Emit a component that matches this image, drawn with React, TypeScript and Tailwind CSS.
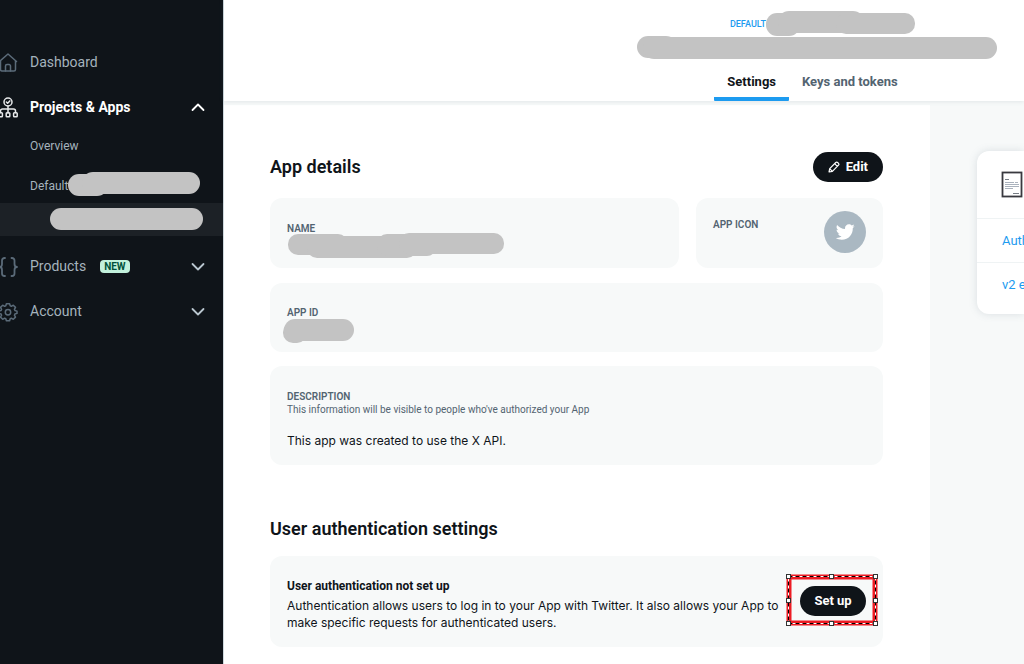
import React from "react";

type NavItemProps = {
  icon: React.ReactNode;
  label: string;
  badge?: string;
  chevron?: "up" | "down";
  active?: boolean;
};

// Sidebar icons
function HomeIcon() {
  return (
    <svg width="20" height="20" viewBox="0 0 20 20" fill="none" stroke="#5b6b79" strokeWidth="1.5" strokeLinejoin="round" strokeLinecap="round">
      <path d="M1.5 8.500 10 1 18.500 8.500M2.500 8v8.500a1.500 1.500 0 0 0 1.500 1.500h12a1.500 1.500 0 0 0 1.500-1.500V8" />
      <path d="M7.500 18v-5a1.500 1.500 0 0 1 1.500-1.500h2a1.500 1.500 0 0 1 1.500 1.500v5" />
    </svg>
  );
}

function ProjectsIcon() {
  return (
    <svg width="20" height="22" viewBox="0 0 20 22" fill="none" stroke="#e7e9ea" strokeWidth="1.5" strokeLinejoin="round" strokeLinecap="round">
      <circle cx="10" cy="5" r="4" />
      <path d="m8.400 5 1.200 1.200 2.200-2.300M10 9v7M2.500 15.500v-1.500a2 2 0 0 1 2-2h11a2 2 0 0 1 2 2v1.500" />
      <rect x="0.800" y="15.800" width="3.600" height="4" rx="0.800" />
      <rect x="8.200" y="15.800" width="3.600" height="4" rx="0.800" />
      <rect x="15.600" y="15.800" width="3.600" height="4" rx="0.800" />
    </svg>
  );
}

function BracesIcon() {
  return (
    <svg width="20" height="20" viewBox="0 0 20 20" fill="none" stroke="#5b6b79" strokeWidth="1.800" strokeLinejoin="round" strokeLinecap="round">
      <path d="M7 1H6.500a2.500 2.500 0 0 0-2.500 2.500V7c0 1.800-.8 3-2.500 3C3.200 10 4 11.200 4 13v3.500A2.500 2.500 0 0 0 6.500 19H7" />
      <path d="M13.500 1h.5a2.500 2.500 0 0 1 2.500 2.500V7c0 1.800.8 3 2.500 3-1.700 0-2.500 1.200-2.500 3v3.500A2.500 2.500 0 0 1 14 19h-.5" />
    </svg>
  );
}

function GearIcon() {
  return (
    <svg width="20" height="20" viewBox="0 0 20 20" fill="none" stroke="#5b6b79" strokeWidth="1.500" strokeLinejoin="round">
      <path d="M8.400 1.700h3.200l.6 2.100 1.200.5 1.900-1.100 2.200 2.200-1.100 1.900.5 1.200 2.100.6v2.300l-2.100.6-.5 1.200 1.100 1.900-2.200 2.200-1.900-1.100-1.200.5-.6 2.100H8.400l-.6-2.100-1.200-.5-1.900 1.100-2.200-2.200 1.100-1.900-.5-1.200L1 11.400V9.100l2.100-.6.5-1.200-1.100-1.900 2.200-2.200 1.900 1.100 1.200-.5z" />
      <circle cx="10" cy="10.200" r="2.700" />
    </svg>
  );
}

function Chevron({ direction }: { direction: "up" | "down" }) {
  return (
    <svg width="14" height="14" viewBox="0 0 14 14" fill="none" stroke={direction === "up" ? "#ffffff" : "#b9c6cf"} strokeWidth="1.800" strokeLinecap="round" strokeLinejoin="round">
      <path d={direction === "up" ? "M1.500 9 7 3.500l5.500 5.500" : "M1.500 4 7 9.500 12.500 4"} />
    </svg>
  );
}

function PencilIcon() {
  return (
    <svg width="12" height="12" viewBox="0 0 12 12" fill="none" stroke="white" strokeWidth="1.200" strokeLinejoin="round">
      <path d="M1 11 1.700 7.600 7.800 1.500a1.300 1.300 0 0 1 1.800 0l.9.9a1.300 1.300 0 0 1 0 1.800L4.400 10.300zM6.700 2.700l2.600 2.600M1.700 7.600l2.700 2.700" />
    </svg>
  );
}

function BirdIcon() {
  return (
    <svg width="20" height="20" viewBox="0 0 24 24" fill="white">
      <path d="M23.643 4.937c-.835.37-1.732.62-2.675.733.962-.576 1.700-1.490 2.048-2.578-.9.534-1.897.922-2.958 1.130-.85-.904-2.060-1.470-3.400-1.470-2.572 0-4.658 2.086-4.658 4.660 0 .364.042.718.120 1.060-3.873-.195-7.304-2.050-9.602-4.868-.4.690-.63 1.490-.63 2.342 0 1.616.823 3.043 2.072 3.878-.764-.025-1.482-.234-2.110-.583v.060c0 2.257 1.605 4.140 3.737 4.568-.392.106-.803.162-1.227.162-.3 0-.593-.028-.877-.082.593 1.850 2.313 3.198 4.352 3.234-1.595 1.250-3.604 1.995-5.786 1.995-.376 0-.747-.022-1.112-.065 2.062 1.323 4.510 2.093 7.140 2.093 8.570 0 13.255-7.098 13.255-13.254 0-.2-.005-.402-.014-.602.910-.658 1.700-1.477 2.323-2.410z" />
    </svg>
  );
}

function DocumentIcon() {
  return (
    <svg width="22" height="27" viewBox="0 0 22 27" fill="none" stroke="#aab2bd">
      <rect x="1.500" y="1.500" width="19" height="24" fill="white" stroke="#39393f" strokeWidth="1.800" />
      <path d="M4 8.500h4M12 22.500h6" stroke="#777d85" />
      <path d="M4 11.500h9M14 11.500h3M4 13.500h14M4 15.500h14M4 17.500h8" />
    </svg>
  );
}

function NavItem({ icon, label, badge, chevron, active }: NavItemProps) {
  return (
    <button type="button" className="flex h-[45px] w-full items-center pr-[18px] text-left">
      <span className="-ml-0.5 flex w-8 shrink-0">
        {icon}
      </span>
      <span className={active ? "text-[14px] font-bold text-white" : "text-[14px] text-[#a5b3bd]"}>{label}</span>
      {badge && (
        <span className="ml-3.5 rounded-sm bg-[#c2f1dc] px-1 text-[10px] leading-[13px] font-bold text-[#00513a]">{badge}</span>
      )}
      {chevron && (
        <span className="ml-auto">
          <Chevron direction={chevron} />
        </span>
      )}
    </button>
  );
}

function Sidebar() {
  return (
    <nav className="w-56 shrink-0 overflow-hidden border-r border-[#cfd9de] bg-[#0f1419] pt-10">
      <NavItem icon={<HomeIcon />} label="Dashboard" />
      <NavItem icon={<ProjectsIcon />} label="Projects & Apps" chevron="up" active />
      <a href="#overview" className="flex h-8 items-center pl-[30px] text-[12px] text-[#a5b3bd]">Overview</a>
      <a href="#default" className="mt-2 flex h-8 items-center pl-[30px] text-[12px] text-[#a5b3bd]">
        Default
        <svg className="mb-1 shrink-0" width="132" height="24" viewBox="0 0 132 24" fill="#c3c3c3">
          <rect y="2" width="40" height="22" rx="11" />
          <rect x="14" width="118" height="22" rx="11" />
        </svg>
      </a>
      <a href="#app" aria-label="App" className="mt-px flex h-[33px] items-center bg-[#1c2126] pb-0.5 pl-[50px]">
        <svg width="153" height="22" viewBox="0 0 153 22" fill="#c3c3c3">
          <rect width="153" height="22" rx="11" />
        </svg>
      </a>
      <div className="mt-2">
        <NavItem icon={<BracesIcon />} label="Products" badge="NEW" chevron="down" />
        <NavItem icon={<GearIcon />} label="Account" chevron="down" />
      </div>
    </nav>
  );
}

function Header() {
  return (
    <header className="relative flex flex-col items-center bg-white pt-[11px] pl-[377px] shadow-[0_0_5px_rgba(101,119,134,0.2)]">
      <div className="flex h-6 items-center pl-5">
        <a href="#default" className="pt-1 text-[9px] font-medium text-[#1d9bf0]">DEFAULT</a>
        <svg width="149" height="25" viewBox="0 0 149 25" fill="#c3c3c3">
          <rect y="2" width="34" height="23" rx="11" />
          <rect x="12" width="86" height="22" rx="11" />
          <rect x="70" y="2" width="79" height="21" rx="10" />
        </svg>
      </div>
      <svg className="mt-px ml-[9px]" width="360" height="24" viewBox="0 0 360 24" fill="#c3c3c3">
        <rect width="40" height="22" rx="11" />
        <rect x="6" y="1" width="354" height="22" rx="11" />
      </svg>
      <div role="tablist" className="flex text-[13px] font-bold">
        <button type="button" role="tab" aria-selected="true" className="h-[41px] rounded-b-[1px] border-b-4 border-[#1d9bf0] px-[13px] pt-1.5 text-[#0f1419]">Settings</button>
        <button type="button" role="tab" aria-selected="false" className="h-[41px] border-b-4 border-transparent px-[13px] pt-1.5 text-[#536471]">Keys and tokens</button>
      </div>
    </header>
  );
}

function Card({ className = "", children }: { className?: string; children: React.ReactNode }) {
  return <div className={`rounded-xl bg-[#f7f9f9] px-[17px] ${className}`}>{children}</div>;
}

function Label({ children }: { children: React.ReactNode }) {
  return <h3 className="text-[10px] leading-[13px] font-semibold text-[#536471]">{children}</h3>;
}

// Red frame with resize handles around the call to action
function Selection({ children }: { children: React.ReactNode }) {
  return (
    <div className="relative -mr-3 flex h-[52px] w-[92px] shrink-0 items-center justify-center">
      <svg className="absolute inset-0" width="92" height="52" viewBox="0 0 92 52" fill="none">
        <rect x="3" y="3" width="86" height="46" stroke="#ed1c24" strokeWidth="5" />
        <rect x="2.500" y="2.500" width="87" height="47" stroke="white" />
        <rect x="2.500" y="2.500" width="87" height="47" stroke="black" strokeDasharray="4 3" />
        {[2.5, 45.5, 89.5].map((x) =>
          [2.5, 26.5, 49.5].map((y) =>
            x === 45.5 && y === 26.5 ? null : (
              <rect key={`${x}-${y}`} x={x - 2} y={y - 2} width="4" height="4" fill="white" stroke="#333333" />
            )
          )
        )}
      </svg>
      <div className="relative pt-0.5 pl-0.5">{children}</div>
    </div>
  );
}

function AppSettings() {
  return (
    <main className="w-[706px] shrink-0 border-t-4 border-[#f7f9f9] bg-white pt-[47px] pr-[47px] pb-[17px] pl-[46px] text-[#0f1419]">
      <div className="flex h-[30px] items-center justify-between">
        <h2 className="text-[18px] leading-6 font-semibold">App details</h2>
        <button type="button" className="flex h-[30px] items-center gap-1.5 rounded-full bg-[#0f1419] px-[15px] text-[13px] font-bold text-white">
          <PencilIcon />
          Edit
        </button>
      </div>

      <div className="mt-4 flex gap-[17px]">
        <Card className="h-[70px] flex-1 pt-6">
          <Label>NAME</Label>
          <svg className="-mt-0.5" width="217" height="25" viewBox="0 0 217 25" fill="#c3c3c3">
            <rect x="1" y="1" width="60" height="21" rx="10" />
            <rect x="20" y="3" width="110" height="22" rx="10" />
            <rect x="90" y="1" width="60" height="22" rx="10" />
            <rect x="112" width="105" height="21" rx="10" />
          </svg>
        </Card>
        <Card className="flex h-[70px] w-[187px] justify-between pt-[13px]">
          <div className="pt-[7px]">
            <Label>APP ICON</Label>
          </div>
          <div className="flex size-[42px] items-center justify-center rounded-full bg-[#aab8c2]">
            <BirdIcon />
          </div>
        </Card>
      </div>

      <Card className="mt-[15px] h-[69px] pt-[23px]">
        <Label>APP ID</Label>
        <svg className="-ml-1" width="71" height="25" viewBox="0 0 71 25" fill="#c3c3c3">
          <rect y="3" width="24" height="21" rx="10" />
          <rect x="1" width="70" height="22" rx="11" />
        </svg>
      </Card>

      <Card className="mt-3.5 h-[99px] pt-6">
        <Label>DESCRIPTION</Label>
        <p className="text-[10px] leading-[14px] text-[#536471]">This information will be visible to people who've authorized your App</p>
        <p className="mt-[15px] font-[Inter,sans-serif] text-[12px] leading-[18px]">This app was created to use the X API.</p>
      </Card>

      <h2 className="mt-[52px] text-[18px] leading-6 font-semibold">User authentication settings</h2>
      <Card className="mt-[15px] flex h-[91px] items-start">
        <div className="flex-1 pt-[22px]">
          <h3 className="text-[12px] leading-4 font-bold">User authentication not set up</h3>
          <p className="mt-[3px] font-[Inter,sans-serif] text-[12px] leading-[17px]">
            Authentication allows users to log in to your App with Twitter. It also allows your App to make specific requests for authenticated users.
          </p>
        </div>
        <div className="pt-[18px]">
          <Selection>
            <button type="button" className="h-[30px] rounded-full bg-[#0f1419] px-[14px] text-[13px] font-bold text-white">Set up</button>
          </Selection>
        </div>
      </Card>
    </main>
  );
}

function Resources() {
  return (
    <aside className="min-w-0 flex-1 overflow-hidden bg-[#f7f9f9] pt-[50px] pl-[47px]">
      <div className="rounded-l-xl bg-white text-[13px] whitespace-nowrap text-[#1d9bf0] shadow-[0_0_8px_rgba(101,119,134,0.2)]">
        <div className="flex h-[67px] items-center pl-6">
          <DocumentIcon />
        </div>
        <a href="#auth" className="flex h-11 items-center border-t border-[#eff3f4] pl-[25px]">Auth</a>
        <a href="#v2" className="flex h-[52px] items-center border-t border-[#eff3f4] pb-[7px] pl-[25px]">v2 e</a>
      </div>
    </aside>
  );
}

export default function App() {
  return (
    <div className="flex min-h-screen overflow-hidden bg-white font-[Roboto,'Liberation_Sans',sans-serif]">
      <Sidebar />
      <div className="flex min-w-0 flex-1 flex-col">
        <Header />
        <div className="flex flex-1">
          <AppSettings />
          <Resources />
        </div>
      </div>
    </div>
  );
}
